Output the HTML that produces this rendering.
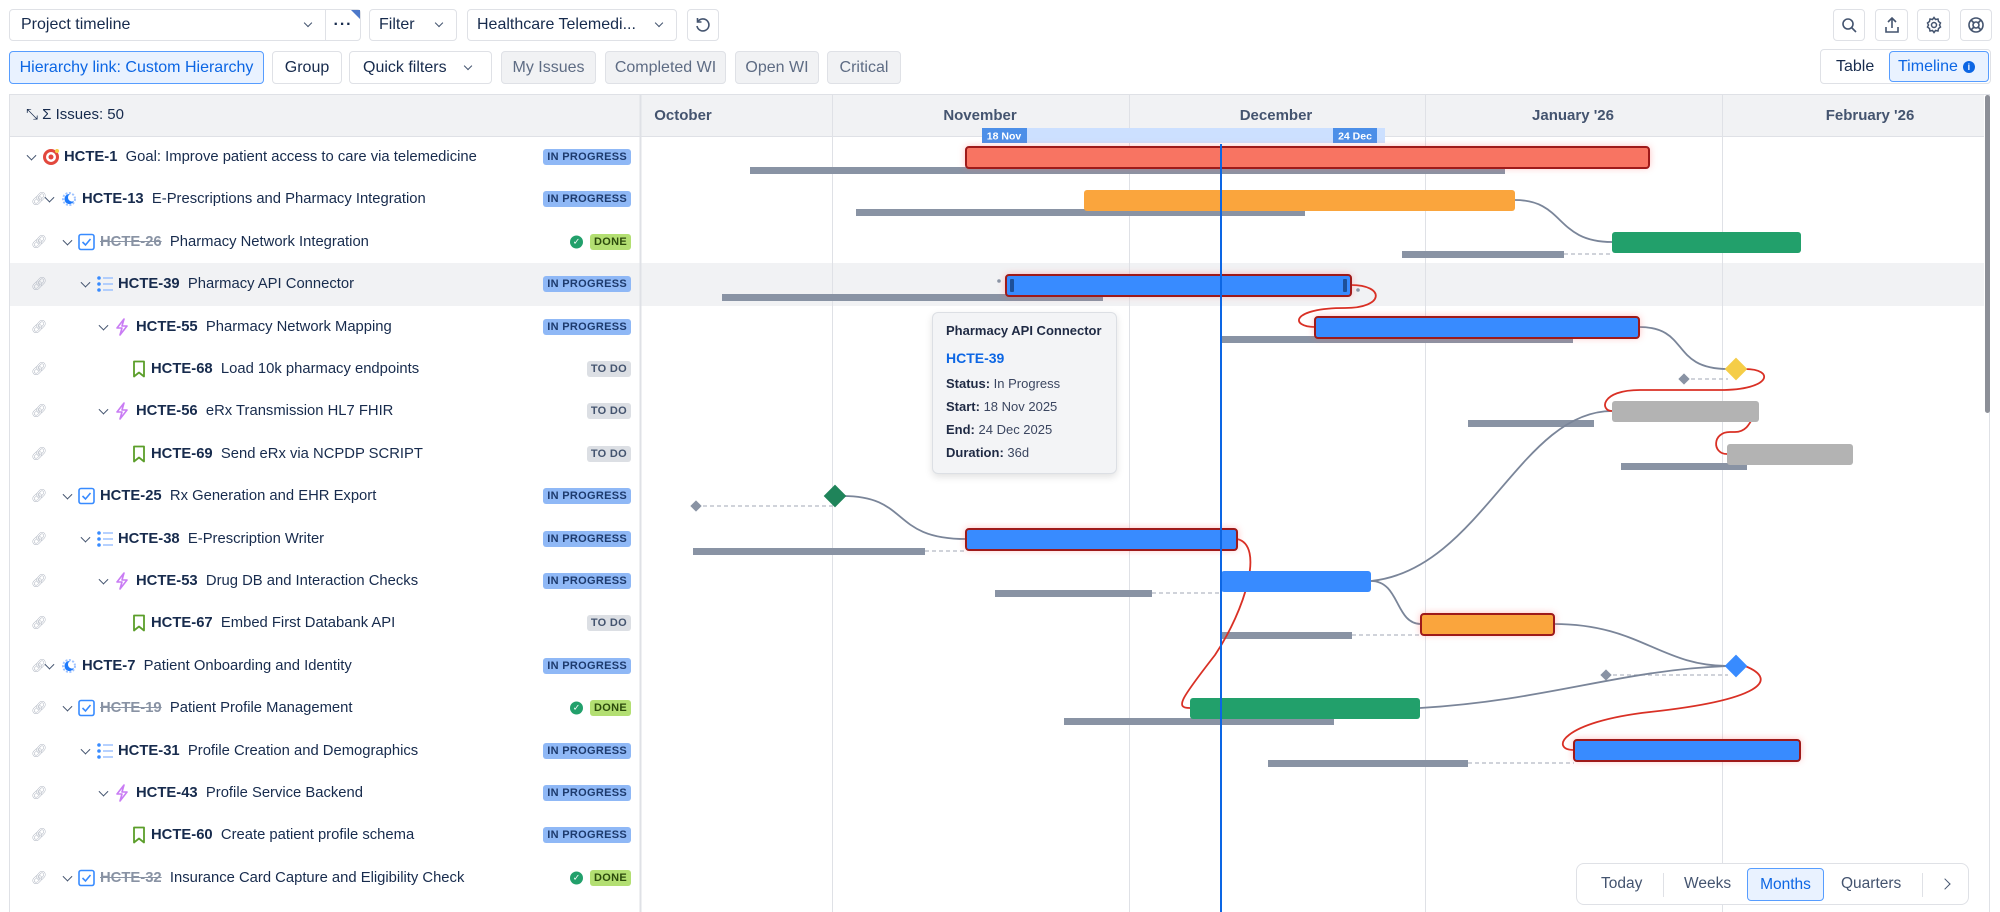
<!DOCTYPE html>
<html><head><meta charset="utf-8"><style>
*{box-sizing:border-box;margin:0;padding:0}
body{width:2000px;height:912px;overflow:hidden;background:#fff;font-family:"Liberation Sans",Arial,sans-serif;color:#172b4d;position:relative}
.b{position:absolute;border:1px solid #dfe1e6;border-radius:4px;background:#fff;display:flex;align-items:center;font-size:16px;color:#172b4d}
.g{background:#f1f2f4;color:#5e6c84}
.chev{display:inline-block;width:7px;height:7px;border-right:1.5px solid #44546f;border-bottom:1.5px solid #44546f;transform:rotate(45deg)}
.row{position:absolute;left:9px;width:631px;height:42px;font-size:14.8px;white-space:nowrap}
.row>*{position:absolute;top:50%;transform:translateY(-50%)}
.row>.chev{transform:translateY(-70%) rotate(45deg)}
.key{font-weight:bold}
.strike{color:#8993a4;text-decoration:line-through;font-weight:bold}
.bd{right:9px;font-size:11px;font-weight:bold;padding:2px 4px;border-radius:3px;letter-spacing:.3px}
.ip{background:#8fb8f6;color:#1d3a6d}
.dn{background:#b3df72;color:#2c4a0c}
.td{background:#dcdfe4;color:#44546f}
.tt{position:absolute;left:932px;top:312px;width:185px;height:162px;background:#f3f4f6;border:1px solid #dcdfe4;border-radius:6px;box-shadow:0 3px 8px rgba(0,0,0,.12);padding:10px 13px;font-size:13px;color:#3b4660}
.tt div{margin-bottom:8px}
.tt b{color:#1f2a44}
</style></head><body>

<div class="b" style="left:9px;top:9px;width:317px;height:32px;padding-left:11px;border-radius:4px 0 0 4px">Project timeline<span class="chev" style="position:absolute;right:14px;top:10px;width:6px;height:6px"></span></div>
<div class="b" style="left:325px;top:9px;width:36px;height:32px;justify-content:center;border-radius:0 4px 4px 0;font-weight:bold;letter-spacing:1px">···<span style="position:absolute;right:0;top:0;border-top:9px solid #4c78c9;border-left:9px solid transparent"></span></div>
<div class="b" style="left:369px;top:9px;width:88px;height:32px;padding-left:9px">Filter<span class="chev" style="position:absolute;right:14px;top:10px;width:6px;height:6px"></span></div>
<div class="b" style="left:467px;top:9px;width:210px;height:32px;padding-left:9px">Healthcare Telemedi...<span class="chev" style="position:absolute;right:14px;top:10px;width:6px;height:6px"></span></div>
<div class="b" style="left:687px;top:9px;width:32px;height:32px;justify-content:center"><svg width="18" height="18" viewBox="0 0 18 18" fill="none" stroke="#44546f" stroke-width="1.6"><path d="M4 5.5A6 6 0 1 1 3 10"/><path d="M3.5 2v4h4"/></svg></div>
<div class="b" style="left:1833px;top:9px;width:32px;height:32px;justify-content:center"><svg width="18" height="18" fill="none" stroke="#44546f" stroke-width="1.6"><circle cx="8" cy="8" r="5"/><path d="M12 12l4 4"/></svg></div>
<div class="b" style="left:1875px;top:9px;width:33px;height:32px;justify-content:center"><svg width="18" height="18" fill="none" stroke="#44546f" stroke-width="1.6"><path d="M9 12V2M5 6l4-4 4 4M3 11v5h12v-5"/></svg></div>
<div class="b" style="left:1917px;top:9px;width:33px;height:32px;justify-content:center"><svg width="18" height="18" fill="none" stroke="#44546f" stroke-width="1.5"><circle cx="9" cy="9" r="2.5"/><path d="M9 1.5l1.5 2 2.5-.5.5 2.5 2 1.5-1 2 1 2-2 1.5-.5 2.5-2.5-.5-1.5 2-1.5-2-2.5.5-.5-2.5-2-1.5 1-2-1-2 2-1.5.5-2.5 2.5.5z"/></svg></div>
<div class="b" style="left:1960px;top:9px;width:32px;height:32px;justify-content:center"><svg width="18" height="18" fill="none" stroke="#44546f" stroke-width="1.6"><circle cx="9" cy="9" r="7"/><circle cx="9" cy="9" r="3"/><path d="M4 4l3 3M14 4l-3 3M4 14l3-3M14 14l-3-3"/></svg></div>

<div class="b" style="left:9px;top:51px;width:255px;height:33px;justify-content:center;background:#e9f2ff;border-color:#579dff;color:#0c66e4">Hierarchy link: Custom Hierarchy</div>
<div class="b" style="left:272px;top:51px;width:70px;height:33px;justify-content:center">Group</div>
<div class="b" style="left:349px;top:51px;width:143px;height:33px;padding-left:13px">Quick filters<span class="chev" style="position:absolute;right:20px;top:11px;width:6px;height:6px"></span></div>
<div class="b g" style="left:501px;top:51px;width:95px;height:33px;justify-content:center">My Issues</div>
<div class="b g" style="left:605px;top:51px;width:121px;height:33px;justify-content:center">Completed WI</div>
<div class="b g" style="left:735px;top:51px;width:84px;height:33px;justify-content:center">Open WI</div>
<div class="b g" style="left:827px;top:51px;width:74px;height:33px;justify-content:center">Critical</div>
<div class="b" style="left:1820px;top:49px;width:171px;height:35px;padding-left:15px">Table</div>
<div class="b" style="left:1889px;top:51px;width:100px;height:31px;background:#e9f2ff;border-color:#579dff;color:#0c66e4;padding-left:8px">Timeline<span style="display:inline-block;width:12px;height:12px;border-radius:50%;background:#0c66e4;color:#fff;font-size:9px;text-align:center;line-height:12px;margin-left:5px;font-weight:bold">i</span></div>

<div style="position:absolute;left:9px;top:94px;width:1981px;height:818px;border:1px solid #dfe1e6;border-bottom:none"></div>
<div style="position:absolute;left:10px;top:95px;width:1974px;height:42px;background:#f1f2f4;border-bottom:1px solid #dfe1e6"></div>
<div style="position:absolute;left:10px;top:263px;width:1974px;height:43px;background:#f1f2f4"></div>
<div style="position:absolute;left:1985px;top:95px;width:5px;height:318px;background:#8c8f97;border-radius:3px"></div>
<div style="position:absolute;left:26px;top:106px;font-size:15px;color:#172b4d">⤡ Σ Issues: 50</div>

<svg width="2000" height="912" style="position:absolute;left:0;top:0" font-family="Liberation Sans, Arial, sans-serif">
<g stroke="#dfe1e6" stroke-width="1"><line x1="640.5" y1="95" x2="640.5" y2="912" stroke-width="2"/>
<line x1="832.5" y1="95" x2="832.5" y2="912"/><line x1="1129.5" y1="95" x2="1129.5" y2="912"/><line x1="1425.5" y1="95" x2="1425.5" y2="912"/><line x1="1722.5" y1="95" x2="1722.5" y2="912"/></g>
<g font-size="15" font-weight="bold" fill="#44546f" text-anchor="middle"><text x="683" y="120">October</text><text x="980" y="120">November</text><text x="1276" y="120">December</text><text x="1573" y="120">January '26</text><text x="1870" y="120">February '26</text></g>
<rect x="982" y="128" width="403" height="15" fill="#cce0ff"/>
<rect x="982" y="128" width="45" height="15" fill="#4c8fe8"/><text x="1004" y="139.5" font-size="10.5" font-weight="bold" fill="#fff" text-anchor="middle">18 Nov</text>
<rect x="1333" y="128" width="44" height="15" fill="#4c8fe8"/><text x="1355" y="139.5" font-size="10.5" font-weight="bold" fill="#fff" text-anchor="middle">24 Dec</text>

<g fill="#8993a4">
<rect x="750" y="167" width="755" height="7"/><rect x="856" y="209" width="449" height="7"/><rect x="1402" y="251" width="162" height="7"/>
<rect x="722" y="294" width="381" height="7"/><rect x="1221" y="336" width="352" height="7"/><rect x="1468" y="420" width="126" height="7"/>
<rect x="1621" y="463" width="126" height="7"/><rect x="693" y="548" width="232" height="7"/><rect x="995" y="590" width="157" height="7"/>
<rect x="1221" y="632" width="131" height="7"/><rect x="1064" y="718" width="270" height="7"/><rect x="1268" y="760" width="200" height="7"/>
</g>
<g stroke="#b3b9c4" stroke-width="1.3" stroke-dasharray="4 3" fill="none">
<path d="M1564 254H1612M1684 379H1728M696 506H835M925 551H966M1152 593H1221M1352 635H1421M1606 675H1728M1468 763H1574"/></g>
<g fill="#8993a4"><rect x="1680" y="375" width="8" height="8" transform="rotate(45 1684 379)"/><rect x="692" y="502" width="8" height="8" transform="rotate(45 696 506)"/><rect x="1602" y="671" width="8" height="8" transform="rotate(45 1606 675)"/></g>

<g fill="none" stroke="#7a8599" stroke-width="1.8">
<path d="M1515 200C1565 200,1555 242,1612 242"/><path d="M1639 327C1690 327,1670 369,1728 369"/>
<path d="M843 496C910 496,890 539,966 539"/><path d="M1371 581C1480 570,1520 411,1612 411"/>
<path d="M1371 581C1400 581,1395 624,1421 624"/><path d="M1554 624C1640 624,1660 666,1728 666"/>
<path d="M1420 708C1550 700,1620 670,1728 666"/></g>
<g fill="none" stroke="#d93025" stroke-width="1.8">
<path d="M1351 285C1385 285,1385 308,1345 308C1290 308,1290 327,1315 327"/>
<path d="M1745 369C1775 369,1772 390,1720 390L1640 390C1600 390,1600 411,1612 411"/>
<path d="M1759 411C1752 411,1752 432,1735 432L1730 432C1712 432,1712 454,1727 454"/>
<path d="M1237 539C1265 545,1245 610,1215 655C1180 700,1175 708,1190 708"/>
<path d="M1745 666C1780 680,1760 700,1650 712C1560 722,1550 750,1574 750"/></g>

<defs><filter id="gl" x="-10%" y="-80%" width="120%" height="260%"><feGaussianBlur stdDeviation="4"/></filter></defs>
<g fill="#ff6b6b" opacity=".55" filter="url(#gl)">
<rect x="966" y="147" width="683" height="20"/><rect x="1006" y="275" width="345" height="20"/><rect x="1315" y="317" width="324" height="20"/>
<rect x="966" y="529" width="271" height="20"/><rect x="1421" y="614" width="133" height="20"/><rect x="1574" y="740" width="226" height="20"/></g>
<rect x="966" y="147" width="683" height="21" rx="3" fill="#f87462" stroke="#9e1a1a" stroke-width="2"/>
<rect x="1084" y="190" width="431" height="21" rx="3" fill="#faa53d"/>
<rect x="1612" y="232" width="189" height="21" rx="3" fill="#22a06b"/>
<rect x="1006" y="275" width="345" height="21" rx="3" fill="#388bff" stroke="#9e1a1a" stroke-width="2"/>
<rect x="1010" y="279" width="4" height="13" rx="1" fill="#1d4f99"/><rect x="1343" y="279" width="4" height="13" rx="1" fill="#1d4f99"/>
<rect x="1315" y="317" width="324" height="21" rx="3" fill="#388bff" stroke="#9e1a1a" stroke-width="2"/>
<rect x="1728" y="361" width="16" height="16" fill="#f5cd47" transform="rotate(45 1736 369)"/>
<rect x="1612" y="401" width="147" height="21" rx="3" fill="#b3b3b3"/>
<rect x="1727" y="444" width="126" height="21" rx="3" fill="#b3b3b3"/>
<rect x="827" y="488" width="16" height="16" fill="#1f845a" transform="rotate(45 835 496)"/>
<rect x="966" y="529" width="271" height="21" rx="3" fill="#388bff" stroke="#9e1a1a" stroke-width="2"/>
<rect x="1221" y="571" width="150" height="21" rx="3" fill="#388bff"/>
<rect x="1421" y="614" width="133" height="21" rx="3" fill="#faa53d" stroke="#9e1a1a" stroke-width="2"/>
<rect x="1728" y="658" width="16" height="16" fill="#388bff" transform="rotate(45 1736 666)"/>
<rect x="1190" y="698" width="230" height="21" rx="3" fill="#22a06b"/>
<rect x="1574" y="740" width="226" height="21" rx="3" fill="#388bff" stroke="#9e1a1a" stroke-width="2"/>
<circle cx="999" cy="281" r="1.8" fill="#8993a4"/><circle cx="1358" cy="290" r="1.8" fill="#8993a4"/>
<line x1="1221" y1="144" x2="1221" y2="912" stroke="#0c66e4" stroke-width="2"/>
</svg>

<div class="tt">
<div style="font-weight:bold;color:#1f2a44;margin-bottom:12px">Pharmacy API Connector</div>
<div style="font-weight:bold;color:#0c66e4;font-size:14px;margin-bottom:10px">HCTE-39</div>
<div><b>Status:</b> In Progress</div><div><b>Start:</b> 18 Nov 2025</div><div><b>End:</b> 24 Dec 2025</div><div><b>Duration:</b> 36d</div>
</div>

<div id="rows"></div>

<div class="b" style="left:1576px;top:863px;width:393px;height:42px;border-radius:8px;font-size:15.5px;color:#44546f">
<span style="position:absolute;left:24px">Today</span><span style="position:absolute;left:86px;top:9px;width:1px;height:24px;background:#dfe1e6"></span>
<span style="position:absolute;left:107px">Weeks</span>
<span style="position:absolute;left:170px;top:4px;width:77px;height:33px;border:1px solid #579dff;background:#e9f2ff;border-radius:4px;color:#0c66e4;display:flex;align-items:center;justify-content:center">Months</span>
<span style="position:absolute;left:264px">Quarters</span><span style="position:absolute;left:345px;top:9px;width:1px;height:24px;background:#dfe1e6"></span>
<span style="position:absolute;left:364px;top:16px;width:8px;height:8px;border-right:1.6px solid #44546f;border-top:1.6px solid #44546f;transform:rotate(45deg)"></span></div>

<script>
const R=[
[0,'target','HCTE-1','Goal: Improve patient access to care via telemedicine','ip',0,1],
[1,'epic','HCTE-13','E-Prescriptions and Pharmacy Integration','ip',1,1],
[2,'check','HCTE-26','Pharmacy Network Integration','dn',0,1],
[3,'list','HCTE-39','Pharmacy API Connector','ip',0,1],
[4,'bolt','HCTE-55','Pharmacy Network Mapping','ip',0,1],
[5,'mark','HCTE-68','Load 10k pharmacy endpoints','td',0,0],
[4,'bolt','HCTE-56','eRx Transmission HL7 FHIR','td',0,1],
[5,'mark','HCTE-69','Send eRx via NCPDP SCRIPT','td',0,0],
[2,'check','HCTE-25','Rx Generation and EHR Export','ip',0,1],
[3,'list','HCTE-38','E-Prescription Writer','ip',0,1],
[4,'bolt','HCTE-53','Drug DB and Interaction Checks','ip',0,1],
[5,'mark','HCTE-67','Embed First Databank API','td',0,0],
[1,'epic','HCTE-7','Patient Onboarding and Identity','ip',0,1],
[2,'check','HCTE-19','Patient Profile Management','dn',0,1],
[3,'list','HCTE-31','Profile Creation and Demographics','ip',0,1],
[4,'bolt','HCTE-43','Profile Service Backend','ip',0,1],
[5,'mark','HCTE-60','Create patient profile schema','ip',0,0],
[2,'check','HCTE-32','Insurance Card Capture and Eligibility Check','dn',0,1]];
const IC={
target:'<svg width="18" height="18"><circle cx="9" cy="9" r="8" fill="#e2483d"/><circle cx="9" cy="9" r="5" fill="#fff"/><circle cx="9" cy="9" r="2.5" fill="#e2483d"/><circle cx="15" cy="3" r="2" fill="#f5cd47"/></svg>',
epic:'<svg width="18" height="18"><circle cx="9" cy="9" r="6" fill="none" stroke="#9dc2ff" stroke-width="2" stroke-dasharray="2 1.5"/><path d="M10 4a5 5 0 1 0 4 7a4 4 0 0 1-4-7z" fill="#1d7afc"/></svg>',
check:'<svg width="17" height="17"><rect x="1" y="1" width="15" height="15" rx="2" fill="#fff" stroke="#388bff" stroke-width="1.6"/><path d="M4.5 8.5l3 3 5-6" fill="none" stroke="#388bff" stroke-width="1.6"/></svg>',
list:'<svg width="18" height="18"><g fill="#388bff"><circle cx="3" cy="3" r="1.8"/><circle cx="3" cy="9" r="1.8"/><circle cx="3" cy="15" r="1.8"/></g><g stroke="#9dc2ff" stroke-width="1.5"><path d="M7 3h10M7 9h10M7 15h10"/></g></svg>',
bolt:'<svg width="16" height="18"><path d="M10 1L3 10h5l-2 7 7-9H8z" fill="none" stroke="#c97cf4" stroke-width="1.6" stroke-linejoin="round"/></svg>',
mark:'<svg width="14" height="17"><path d="M2 1h10v15l-5-4-5 4z" fill="none" stroke="#5b9e2a" stroke-width="1.8" stroke-linejoin="round"/></svg>'};
const LB={ip:'IN PROGRESS',dn:'DONE',td:'TO DO'};
let h='';
R.forEach((r,i)=>{const [d,ic,k,t,s,,ch]=r;const y=136+42.4*i;
let x=33+18*d;
h+=`<div class="row" style="top:${y}px">`;
if(i>0)h+=`<span style="left:22px;color:#b3b9c4;font-size:13px">🔗︎</span>`;
if(ch)h+=`<span class="chev" style="left:${x-14}px"></span>`;
h+=`<span style="left:${x}px;line-height:0">${IC[ic]}</span>`;
const strike=(k=='HCTE-26'||k=='HCTE-19'||k=='HCTE-32');
h+=`<span style="left:${x+(ic=='mark'?19:22)}px"><span class="${strike?'strike':'key'}">${k}</span>&nbsp; ${t}</span>`;
if(s=='dn')h+=`<span style="right:57px;width:13px;height:13px;border-radius:50%;background:#22a06b;color:#fff;font-size:9px;text-align:center;line-height:13px">✓</span>`;
h+=`<span class="bd ${s}">${LB[s]}</span></div>`;});
document.getElementById('rows').innerHTML=h;
</script>
</body></html>
